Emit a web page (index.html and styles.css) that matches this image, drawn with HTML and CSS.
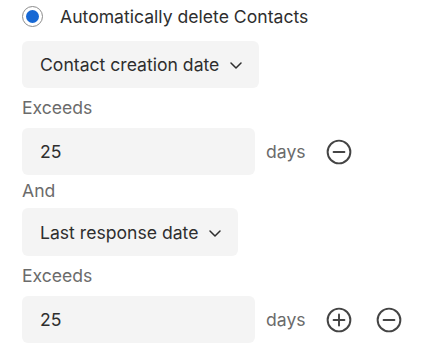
FILE: index.html
```html
<!DOCTYPE html>
<html lang="en">
<head>
    <meta charset="UTF-8">
    <meta name="viewport" content="width=device-width, initial-scale=1.0">
    <title>Contact retention</title>
    <link rel="stylesheet" href="styles.css">
</head>
<body>
    <div class="rules">
        <label class="radio-row">
            <span class="radio"><span class="radio-dot"></span></span>
            <span class="radio-label">Automatically delete Contacts</span>
        </label>

        <!-- first condition -->
        <button class="select">
            Contact creation date
            <svg class="chevron" viewBox="0 0 12 7" fill="none" stroke="currentColor" stroke-width="1.5" stroke-linecap="round" stroke-linejoin="round">
                <polyline points="1 1 6 6 11 1"></polyline>
            </svg>
        </button>
        <div class="field-label">Exceeds</div>
        <div class="value-row">
            <div class="value-input">25</div>
            <span class="unit">days</span>
            <button class="icon-btn" aria-label="Remove">
                <svg viewBox="0 0 24 24" fill="none" stroke="currentColor" stroke-width="1.8" stroke-linecap="round">
                    <circle cx="12" cy="12" r="10.5"></circle>
                    <line x1="7" y1="12" x2="17" y2="12"></line>
                </svg>
            </button>
        </div>

        <div class="join-label">And</div>

        <!-- second condition -->
        <button class="select">
            Last response date
            <svg class="chevron" viewBox="0 0 12 7" fill="none" stroke="currentColor" stroke-width="1.5" stroke-linecap="round" stroke-linejoin="round">
                <polyline points="1 1 6 6 11 1"></polyline>
            </svg>
        </button>
        <div class="field-label">Exceeds</div>
        <div class="value-row">
            <div class="value-input">25</div>
            <span class="unit">days</span>
            <button class="icon-btn" aria-label="Add">
                <svg viewBox="0 0 24 24" fill="none" stroke="currentColor" stroke-width="1.8" stroke-linecap="round">
                    <circle cx="12" cy="12" r="10.5"></circle>
                    <line x1="7" y1="12" x2="17" y2="12"></line>
                    <line x1="12" y1="7" x2="12" y2="17"></line>
                </svg>
            </button>
            <button class="icon-btn" aria-label="Remove">
                <svg viewBox="0 0 24 24" fill="none" stroke="currentColor" stroke-width="1.8" stroke-linecap="round">
                    <circle cx="12" cy="12" r="10.5"></circle>
                    <line x1="7" y1="12" x2="17" y2="12"></line>
                </svg>
            </button>
        </div>
    </div>
</body>
</html>
```

FILE: styles.css
```css
body {
  margin: 0;
  padding: 0;
  background: #ffffff;
  font-family: 'Inter', 'Liberation Sans', Arial, sans-serif;
  font-size: 17.6px;
  color: #2e2e2e;
}

.rules {
  display: flex;
  flex-direction: column;
  align-items: flex-start;
  padding: 5px 0 0 22px;
}

.radio-row {
  display: flex;
  align-items: center;
  gap: 17px;
  height: 22px;
  margin-bottom: 14px;
}

.radio {
  width: 21px;
  height: 21px;
  box-sizing: border-box;
  border: 1.5px solid #8c8c8c;
  border-radius: 50%;
  display: flex;
  justify-content: center;
  align-items: center;
}

.radio-dot {
  width: 13px;
  height: 13px;
  border-radius: 50%;
  background-color: #1768d4;
}

.select {
  display: flex;
  align-items: center;
  gap: 11px;
  height: 47px;
  padding: 0 17px 0 18px;
  background-color: #f4f4f4;
  border: none;
  border-radius: 6px;
  font-family: inherit;
  font-size: inherit;
  color: #2e2e2e;
}

.chevron {
  width: 12px;
  height: 7px;
  margin-top: 2px;
}

.field-label,
.join-label {
  color: #6b6b6b;
  line-height: 20px;
}

.field-label {
  margin: 10px 0;
}

.join-label {
  margin: 6px 0 7px;
}

.join-label + .select {
  height: 48px;
}

.value-row {
  display: flex;
  align-items: center;
}

.value-input {
  width: 233px;
  height: 47px;
  box-sizing: border-box;
  padding-left: 18px;
  display: flex;
  align-items: center;
  background-color: #f4f4f4;
  border-radius: 6px;
}

.unit {
  color: #6b6b6b;
  margin-left: 11px;
  margin-right: 20px;
}

.icon-btn {
  width: 26px;
  height: 26px;
  padding: 0;
  margin-right: 24px;
  border: none;
  background: none;
  color: #444444;
  display: flex;
}

.icon-btn svg {
  width: 26px;
  height: 26px;
}
```
